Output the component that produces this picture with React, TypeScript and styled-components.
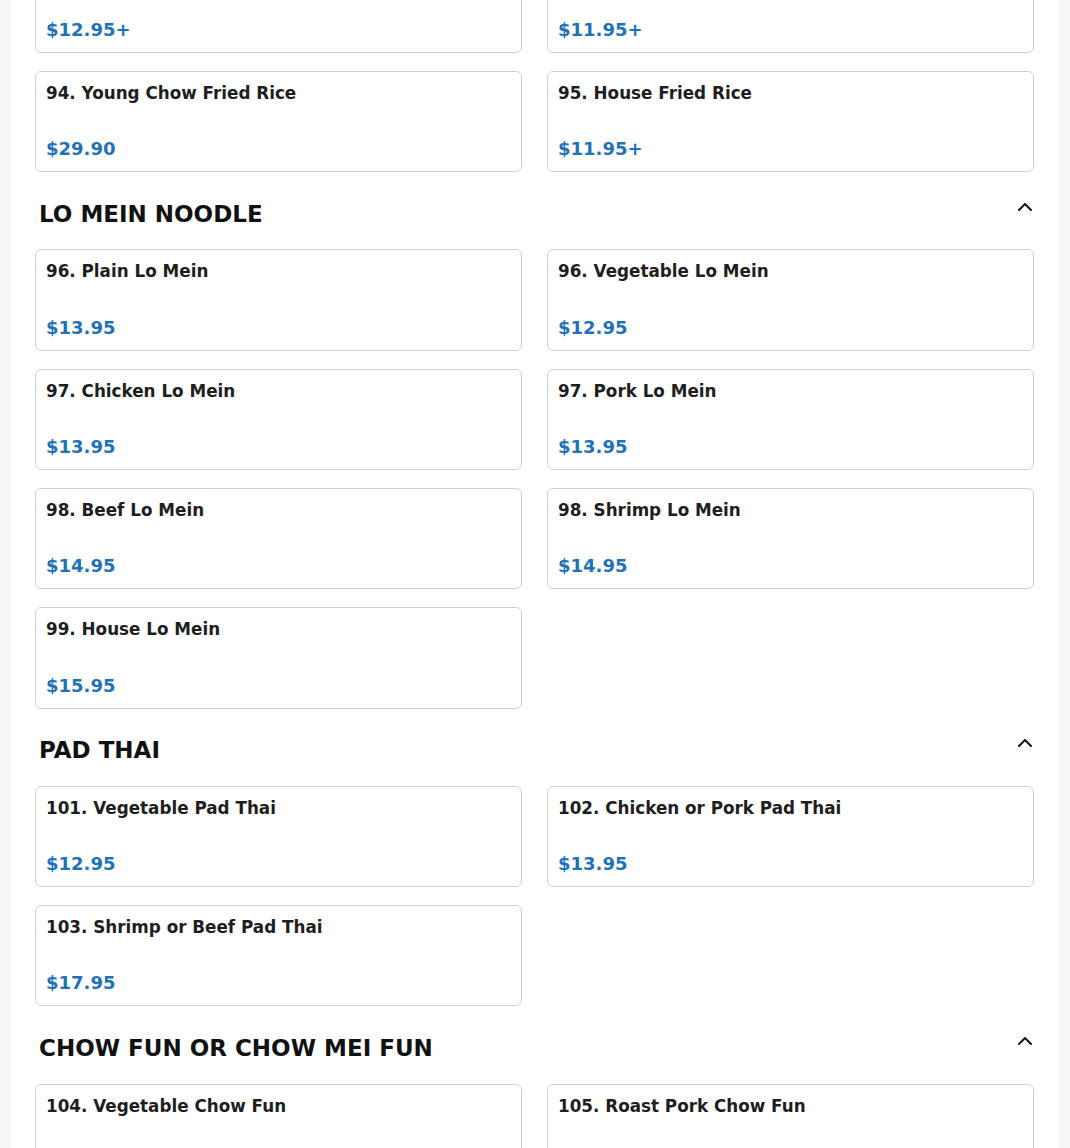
import React from "react";
import styled, { createGlobalStyle } from "styled-components";
import { ChevronUp } from "lucide-react";

type Item = { name: string; price: string };
type Section = { title: string | null; items: Item[] };

const sections: Section[] = [
  {
    title: null,
    items: [
      { name: "92. Shrimp Fried Rice", price: "$12.95+" },
      { name: "93. Chicken or Pork Fried Rice", price: "$11.95+" },
      { name: "94. Young Chow Fried Rice", price: "$29.90" },
      { name: "95. House Fried Rice", price: "$11.95+" },
    ],
  },
  {
    title: "LO MEIN NOODLE",
    items: [
      { name: "96. Plain Lo Mein", price: "$13.95" },
      { name: "96. Vegetable Lo Mein", price: "$12.95" },
      { name: "97. Chicken Lo Mein", price: "$13.95" },
      { name: "97. Pork Lo Mein", price: "$13.95" },
      { name: "98. Beef Lo Mein", price: "$14.95" },
      { name: "98. Shrimp Lo Mein", price: "$14.95" },
      { name: "99. House Lo Mein", price: "$15.95" },
    ],
  },
  {
    title: "PAD THAI",
    items: [
      { name: "101. Vegetable Pad Thai", price: "$12.95" },
      { name: "102. Chicken or Pork Pad Thai", price: "$13.95" },
      { name: "103. Shrimp or Beef Pad Thai", price: "$17.95" },
    ],
  },
  {
    title: "CHOW FUN OR CHOW MEI FUN",
    items: [
      { name: "104. Vegetable Chow Fun", price: "$12.95" },
      { name: "105. Roast Pork Chow Fun", price: "$13.95" },
    ],
  },
];

const App = () => {
  return (
    <Page>
      <GlobalStyle />
      <Column>
        {sections.map((section, i) => (
          <Category key={i} $first={i === 0}>
            {section.title && (
              <Header>
                <HeaderTitle>{section.title}</HeaderTitle>
                <Toggle aria-label="Collapse">
                  <ChevronUp size={24} strokeWidth={2} />
                </Toggle>
              </Header>
            )}
            <Grid>
              {section.items.map((item, j) => (
                <Card key={j}>
                  <ItemName>{item.name}</ItemName>
                  <Price>{item.price}</Price>
                </Card>
              ))}
            </Grid>
          </Category>
        ))}
      </Column>
    </Page>
  );
};

export default App;

const GlobalStyle = createGlobalStyle`
  html, body {
    margin: 0;
    padding: 0;
    background: #f7f7f7;
    font-family: "DejaVu Sans", Verdana, sans-serif;
  }
  body {
    overflow: hidden;
  }
`;

const Page = styled.div`
  height: 1148px;
  overflow: hidden;
  background: #f7f7f7;
`;

const Column = styled.main`
  max-width: 1048px;
  margin: 0 auto;
  background: #fff;
  padding: 0 25px 40px 24px;
  box-sizing: border-box;
  min-height: 1148px;
`;

const Category = styled.section<{ $first?: boolean }>`
  margin-top: ${(p) => (p.$first ? "-48.5px" : "0")};
`;

const Header = styled.div`
  display: flex;
  justify-content: space-between;
  align-items: flex-start;
  padding: 0 0 0 4px;
  margin: 27.5px 0 21.67px;
  height: 28px;
`;

const HeaderTitle = styled.h2`
  margin: 0;
  font-size: 23px;
  line-height: 28px;
  font-weight: 700;
  color: #111;
`;

const Toggle = styled.button`
  border: none;
  background: none;
  padding: 0;
  margin: -5px -3px 0 0;
  color: #111;
  display: flex;
  cursor: pointer;
`;

const Grid = styled.div`
  display: grid;
  grid-template-columns: 1fr 1fr;
  column-gap: 25px;
  row-gap: 18px;
`;

const Card = styled.div`
  display: flex;
  flex-direction: column;
  justify-content: space-between;
  height: 101.33px;
  box-sizing: border-box;
  padding: 11px 10px 11px;
  border: 1px solid #d0d0d0;
  border-radius: 6px;
  background: #fff;
`;

const ItemName = styled.div`
  font-size: 16.8px;
  line-height: 20px;
  font-weight: 700;
  color: #1e1e1e;
`;

const Price = styled.div`
  font-size: 18px;
  line-height: 22px;
  font-weight: 700;
  color: #1f72b8;
`;
